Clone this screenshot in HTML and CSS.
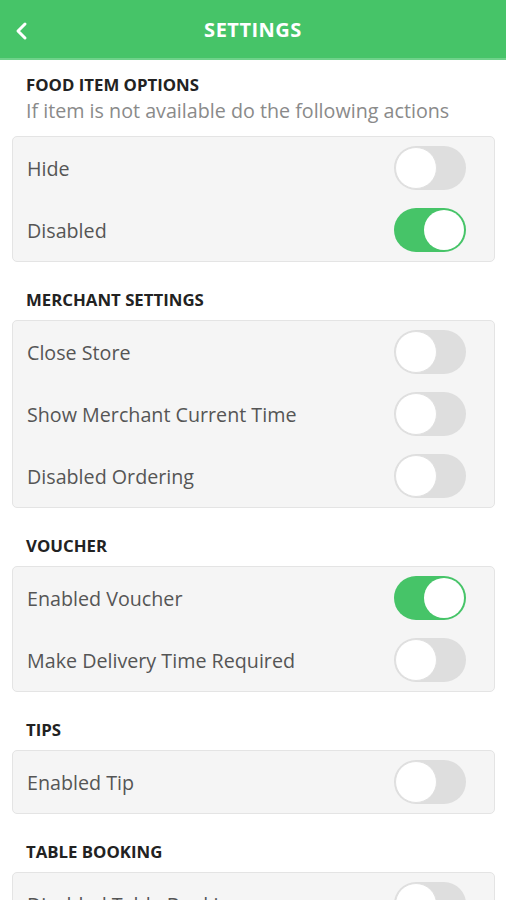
FILE: index.html
```html
<!DOCTYPE html>
<html>
<head>
<meta charset="utf-8">
<link rel="stylesheet" href="styles.css">
</head>
<body>
<header class="topbar">
  <svg class="back" width="16" height="20" viewBox="0 0 16 20"><path d="M11 3 L4 10 L11 17" fill="none" stroke="#fff" stroke-width="3" stroke-linecap="round" stroke-linejoin="round"/></svg>
  <h1 class="title">SETTINGS</h1>
</header>
<main class="content">
  <h2 class="heading first">FOOD ITEM OPTIONS</h2>
  <p class="sub">If item is not available do the following actions</p>
  <div class="card">
    <div class="row"><span class="label">Hide</span><span class="toggle"></span></div>
    <div class="row"><span class="label">Disabled</span><span class="toggle on"></span></div>
  </div>

  <h2 class="heading">MERCHANT SETTINGS</h2>
  <div class="card">
    <div class="row"><span class="label">Close Store</span><span class="toggle"></span></div>
    <div class="row"><span class="label">Show Merchant Current Time</span><span class="toggle"></span></div>
    <div class="row"><span class="label">Disabled Ordering</span><span class="toggle"></span></div>
  </div>

  <h2 class="heading">VOUCHER</h2>
  <div class="card">
    <div class="row"><span class="label">Enabled Voucher</span><span class="toggle on"></span></div>
    <div class="row"><span class="label">Make Delivery Time Required</span><span class="toggle"></span></div>
  </div>

  <h2 class="heading">TIPS</h2>
  <div class="card">
    <div class="row"><span class="label">Enabled Tip</span><span class="toggle"></span></div>
  </div>

  <h2 class="heading">TABLE BOOKING</h2>
  <div class="card">
    <div class="row"><span class="label">Disabled Table Booking</span><span class="toggle"></span></div>
  </div>
</main>
</body>
</html>
```
FILE: styles.css
```css
* { box-sizing: border-box; }
html, body { margin: 0; padding: 0; }
body {
  background: #fff;
  font-family: "Open Sans", "Noto Sans", sans-serif;
  width: 506px;
  height: 900px;
  overflow: hidden;
}
.topbar {
  height: 60px;
  background: #46c468;
  border-bottom: 2px solid #6fd28a;
  display: flex;
  align-items: center;
  justify-content: center;
  position: relative;
}
.back {
  position: absolute;
  left: 14px;
  top: 21px;
}
.title {
  margin: 0;
  color: #fff;
  font-size: 20px;
  font-weight: 700;
  letter-spacing: 0.5px;
}
.content {
  padding: 0 11px 0 12px;
}
.heading {
  margin: 27px 0 9px 14px;
  font-size: 16.8px;
  font-weight: 700;
  line-height: 22px;
  color: #222;
}
.heading.first {
  margin-top: 14px;
  margin-bottom: 0;
}
.sub {
  margin: 2px 0 12px 14px;
  font-size: 19.7px;
  line-height: 26px;
  color: #8a8a8a;
}
.card {
  background: #f5f5f5;
  border: 1px solid #e4e4e4;
  border-radius: 5px;
}
.row {
  height: 62px;
  display: flex;
  align-items: center;
  justify-content: space-between;
  padding: 0 28px 0 14px;
}
.label {
  font-size: 19.7px;
  color: #555;
}
.toggle {
  width: 72px;
  height: 44px;
  border-radius: 22px;
  background: #dedede;
  position: relative;
  flex: none;
}
.toggle::after {
  content: "";
  position: absolute;
  left: 1px;
  top: 1px;
  width: 42px;
  height: 42px;
  border-radius: 50%;
  background: #fff;
  border: 1px solid #e0e0e0;
  box-sizing: border-box;
}
.toggle.on {
  background: #46c468;
}
.toggle.on::after {
  left: auto;
  right: 2px;
  top: 2px;
  width: 40px;
  height: 40px;
  border: none;
}
```
